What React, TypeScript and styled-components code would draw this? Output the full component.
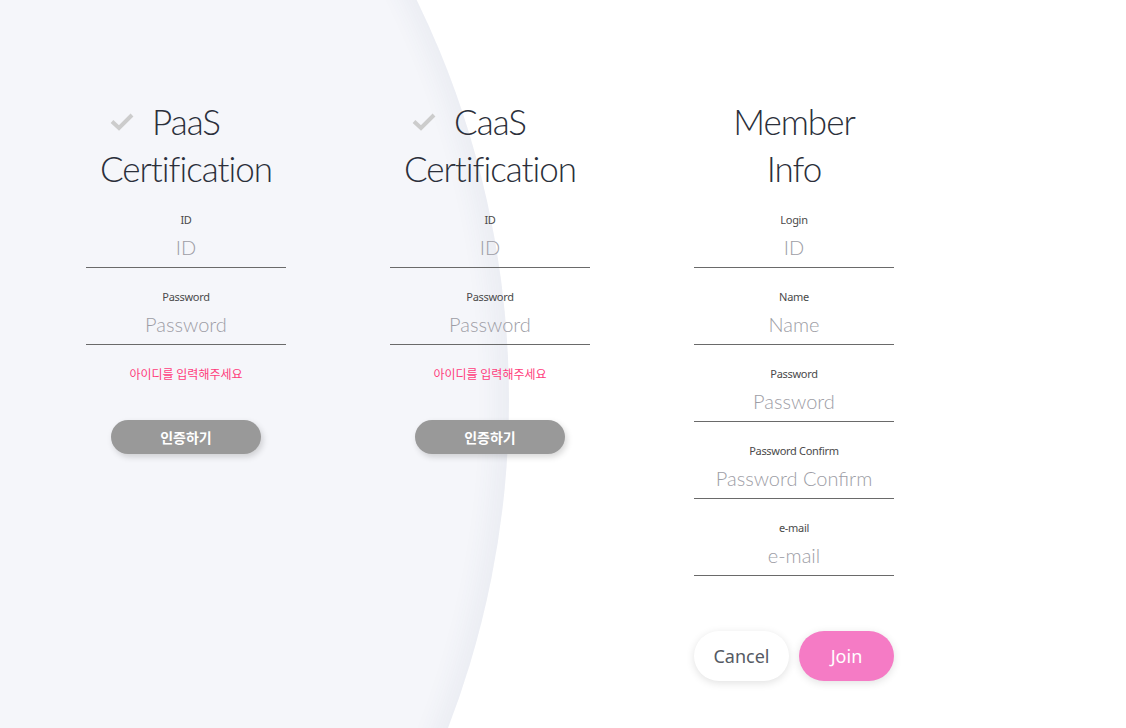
import React from "react";
import styled, { createGlobalStyle } from "styled-components";

const Global = createGlobalStyle`
  html, body { margin: 0; padding: 0; background: #ffffff; }
  body { font-family: Lato, "Noto Sans CJK KR", sans-serif; overflow: hidden; }
  * { box-sizing: border-box; }
`;

const Page = styled.div`
  position: relative;
  width: 1126px;
  height: 728px;
  overflow: hidden;
  background: #ffffff;
`;

const Backdrop = styled.div`
  position: absolute;
  left: -1317px;
  top: -513px;
  width: 1826px;
  height: 1826px;
  border-radius: 50%;
  background: #f5f6fa;
  box-shadow: inset -14px 0 22px rgba(60, 70, 110, 0.05);
`;

const Columns = styled.div`
  position: relative;
  display: flex;
  gap: 104px;
  padding: 98px 0 0 86px;
`;

const Column = styled.div`
  width: 200px;
  display: flex;
  flex-direction: column;
  align-items: center;
`;

const Title = styled.h2`
  margin: 0 0 21px;
  font-family: Lato, sans-serif;
  font-weight: 300;
  font-size: 35px;
  line-height: 47px;
  letter-spacing: -1px;
  font-variant-ligatures: none;
  font-feature-settings: "liga" 0;
  color: #2b2f3a;
  text-align: center;
  white-space: nowrap;
`;

const FirstLine = styled.span`
  position: relative;
  display: inline-block;
`;

const Check = styled.svg`
  position: absolute;
  right: calc(100% + 18px);
  top: 14px;
  width: 24px;
  height: 19px;
`;

const Field = styled.div`
  width: 200px;
  display: flex;
  flex-direction: column;
  align-items: center;
  margin-bottom: 22px;
`;

const Label = styled.label`
  font-family: "Noto Sans", "Noto Sans CJK KR", sans-serif;
  font-size: 11px;
  line-height: 14px;
  color: #4a4a4a;
  letter-spacing: -0.3px;
`;

const Input = styled.input`
  width: 200px;
  height: 41px;
  border: none;
  border-bottom: 1px solid #6a6a6a;
  background: transparent;
  outline: none;
  padding: 0;
  text-align: center;
  font-family: Lato, sans-serif;
  font-weight: 300;
  font-size: 20px;
  color: #333;
  &::placeholder { color: #9d9da5; }
`;

const ErrorText = styled.p`
  margin: -1px 0 38px;
  font-family: "Noto Sans CJK KR", sans-serif;
  font-size: 12px;
  line-height: 16px;
  color: #ff3d7c;
`;

const CertButton = styled.button`
  width: 150px;
  height: 34px;
  border: none;
  border-radius: 17px;
  background: #999999;
  color: #ffffff;
  font-family: "Noto Sans CJK KR", sans-serif;
  font-weight: 700;
  font-size: 14px;
  box-shadow: 2px 3px 6px rgba(0, 0, 0, 0.16);
  cursor: pointer;
`;

const ButtonRow = styled.div`
  width: 200px;
  display: flex;
  justify-content: space-between;
  margin-top: 33px;
`;

const RoundButton = styled.button<{ $primary?: boolean }>`
  width: 95px;
  height: 50px;
  border: none;
  border-radius: 25px;
  background: ${(p) => (p.$primary ? "#f57bc5" : "#ffffff")};
  color: ${(p) => (p.$primary ? "#ffffff" : "#555a63")};
  font-family: "Noto Sans", sans-serif;
  font-size: 18px;
  box-shadow: 0 2px 8px rgba(0, 0, 0, 0.12);
  cursor: pointer;
`;

const CheckIcon = () => (
  <Check viewBox="0 0 24 19">
    <path d="M2 9.5 L9 16 L22 3" fill="none" stroke="#cccccc" strokeWidth="4" />
  </Check>
);

const CertColumn = ({ name }: { name: string }) => (
  <Column>
    <Title>
      <FirstLine>
        <CheckIcon />
        {name}
      </FirstLine>
      <br />
      Certification
    </Title>
    <Field>
      <Label>ID</Label>
      <Input placeholder="ID" />
    </Field>
    <Field>
      <Label>Password</Label>
      <Input type="password" placeholder="Password" />
    </Field>
    <ErrorText>아이디를 입력해주세요</ErrorText>
    <CertButton>인증하기</CertButton>
  </Column>
);

const memberFields = [
  { label: "Login", ph: "ID" },
  { label: "Name", ph: "Name" },
  { label: "Password", ph: "Password" },
  { label: "Password Confirm", ph: "Password Confirm" },
  { label: "e-mail", ph: "e-mail" },
];

export default function App() {
  return (
    <Page>
      <Global />
      <Backdrop />
      <Columns>
        <CertColumn name="PaaS" />
        <CertColumn name="CaaS" />
        <Column>
          <Title>
            Member
            <br />
            Info
          </Title>
          {memberFields.map((f) => (
            <Field key={f.label}>
              <Label>{f.label}</Label>
              <Input placeholder={f.ph} />
            </Field>
          ))}
          <ButtonRow>
            <RoundButton>Cancel</RoundButton>
            <RoundButton $primary>Join</RoundButton>
          </ButtonRow>
        </Column>
      </Columns>
    </Page>
  );
}
